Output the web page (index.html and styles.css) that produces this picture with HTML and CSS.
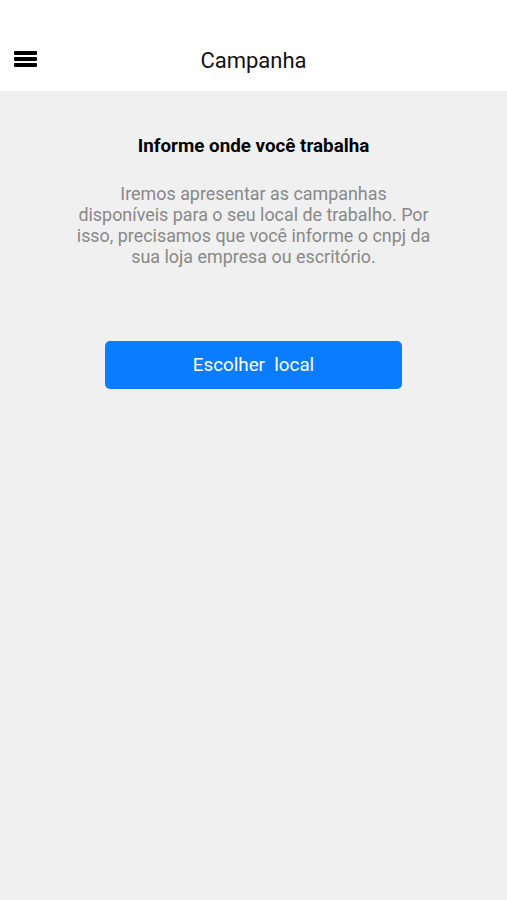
FILE: index.html
```html
<!DOCTYPE html>
<html>
    <head>
        <meta charset="UTF-8"/>
        <title>Campanha</title>
        <link rel="stylesheet" href="styles.css">
    </head>
    <body>
        <div class="top-bar">
            <button class="menu-btn">
                <svg width="24" height="20" viewBox="0 0 24 20">
                    <rect x="0" y="2" width="23" height="4" rx="1" fill="#000"/>
                    <rect x="0" y="8" width="23" height="4" rx="1" fill="#000"/>
                    <rect x="0" y="14" width="23" height="4" rx="1" fill="#000"/>
                </svg>
            </button>
            <span class="top-title">Campanha</span>
        </div>

        <div class="content">
            <h1 class="info-title">Informe onde você trabalha</h1>
            <p class="info-text">Iremos apresentar as campanhas<br>disponíveis para o seu local de trabalho. Por<br>isso, precisamos que você informe o cnpj da<br>sua loja empresa ou escritório.</p>
            <button class="choose-btn">Escolher&nbsp; local</button>
        </div>
    </body>
</html>
```

FILE: styles.css
```css
html,body{
    margin:0;
    padding:0;
    height:100%;
}
body{
    font-family:Roboto,"Noto Sans",sans-serif;
    background:#f0f0f0;
}

.top-bar{
    display:flex;
    align-items:center;
    justify-content:center;
    height:91px;
    padding-top:30px;
    box-sizing:border-box;
    background:#fff;
    position:relative;
}
.menu-btn{
    position:absolute;
    left:14px;
    top:49px;
    border:none;
    background:none;
    padding:0;
    margin:0;
}
.menu-btn svg{
    display:block;
}
.top-title{
    font-size:22px;
    color:#111;
}

.content{
    display:flex;
    flex-direction:column;
    align-items:center;
    padding:0 40px;
}
.info-title{
    margin:43px 0 0;
    font-size:18.8px;
    line-height:24px;
    font-weight:700;
    color:#000;
}
.info-text{
    margin:25px 0 0;
    font-size:17.9px;
    line-height:21px;
    color:#888;
    text-align:center;
    white-space:nowrap;
}
.choose-btn{
    margin-top:74px;
    width:297px;
    height:48px;
    border:none;
    border-radius:5px;
    background:#0a7cff;
    color:#fff;
    font-family:inherit;
    font-size:18.8px;
}
```
